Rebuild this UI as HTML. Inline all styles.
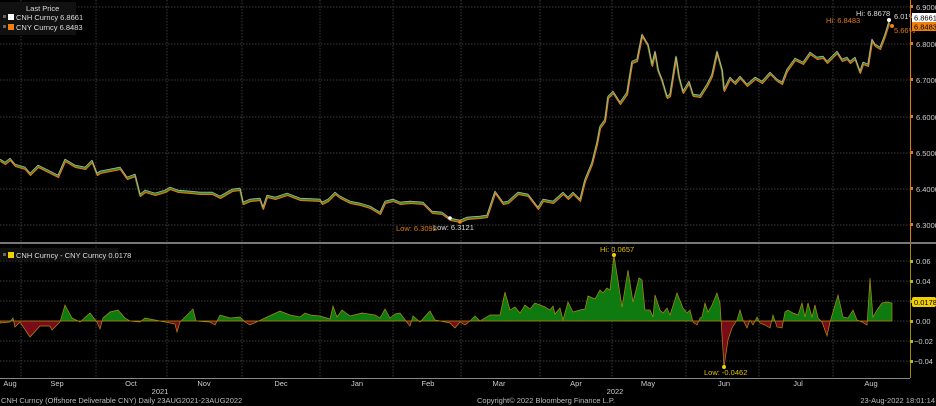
<!DOCTYPE html>
<html><head><meta charset="utf-8"><style>
html,body{margin:0;padding:0;background:#000;}
svg{display:block;font-family:"Liberation Sans",sans-serif;}
text{font-size:7.5px;}
</style></head><body>
<svg width="936" height="406" viewBox="0 0 936 406" xmlns="http://www.w3.org/2000/svg">
<rect width="936" height="406" fill="#000"/>
<defs>
<clipPath id="up"><rect x="0" y="240" width="910" height="81"/></clipPath>
<clipPath id="dn"><rect x="0" y="321" width="910" height="60"/></clipPath>
<polyline id="m" points="0,160 5,163 10,159 15,165 25,168 30,174 38,166 50,172 58,176 65,160 75,166 85,168 92,161 97,174 100,172 110,170 120,168 127,178 135,175 140,195 145,191 155,194 165,191 170,188 178,191 190,192 200,193 212,193 220,197 232,190 240,189 243,203 250,200 260,199 263,208 267,196 275,198 287,194 300,199 320,200 322,203 328,200 335,193 340,197 350,202 360,204 370,207 380,213 385,202 393,200 400,203 410,202 423,203 432,212 442,213 450,219 460,221 467,218 480,217 487,216 495,192 503,203 508,202 518,193 528,195 538,208 543,200 553,202 563,193 568,198 573,193 580,200 585,180 592,163 597,143 600,127 605,120 608,97 613,92 620,103 627,93 632,62 637,60 642,35 648,45 652,65 655,52 658,70 662,80 667,97 670,95 676,57 679,77 683,92 689,82 693,95 700,96 707,85 712,75 717,52 722,70 724,90 730,78 735,83 740,77 747,85 755,78 762,82 770,73 777,80 782,83 787,70 795,59 803,63 810,53 817,58 823,57 827,62 837,52 842,60 847,58 850,62 855,58 860,72 863,63 868,65 872,40 875,45 880,48 885,35 889,22"/>
<polygon id="dp" points="0,321 0,323 10,322 13,318 15,327 20,322 30,337 40,326 50,326 52,330 60,322 65,305 72,318 80,322 90,313 97,322 100,329 103,318 110,312 118,310 125,318 130,321 140,322 145,318 160,321 175,324 177,332 180,322 193,309 196,321 210,322 215,325 220,315 230,318 240,317 245,322 250,325 265,318 280,311 290,315 300,317 305,313 310,315 320,316 330,319 333,306 337,317 342,310 350,316 362,313 375,315 380,318 385,309 390,318 395,314 400,313 406,321 410,326 413,316 420,322 430,311 435,320 445,322 450,323 455,328 460,322 465,325 470,321 475,316 480,321 490,315 500,315 505,292 510,310 515,307 520,313 525,305 530,309 535,303 545,307 550,310 553,306 555,314 560,308 563,320 568,302 573,312 580,310 585,309 588,296 595,299 600,290 603,293 607,288 610,290 614,255 622,307 628,270 633,302 639,278 642,280 645,310 650,310 653,317 655,295 660,310 663,313 667,308 670,315 677,293 683,308 687,313 690,310 693,322 697,325 700,318 702,317 705,303 708,312 712,305 717,293 720,303 724,367 728,340 732,328 737,320 740,310 743,320 747,328 750,320 753,325 757,317 760,323 765,325 770,328 773,315 777,327 782,328 785,312 788,310 793,313 798,315 802,303 805,317 808,303 812,317 815,305 818,318 822,322 827,336 830,322 838,295 843,317 848,318 853,310 857,320 862,322 867,325 870,278 873,317 877,310 882,303 887,302 892,303 892,321"/>
</defs>
<g stroke="#3a3a3a" stroke-width="1" stroke-dasharray="1.5,1.5">
<path d="M0 7H910M0 44H910M0 80H910M0 117H910M0 153H910M0 189H910M0 225H910"/>
<path d="M0 261H910M0 281H910M0 301H910M0 321H910M0 341H910M0 361H910"/>
<path d="M21 0V379M96 0V379M167 0V379M242 0V379M320 0V379M393 0V379M461 0V379M540 0V379M612 0V379M686 0V379M759 0V379M833 0V379"/>
</g>
<rect x="0" y="242" width="936" height="2" fill="#777"/>
<rect x="0" y="378" width="910" height="1" fill="#888"/>
<g fill="none" stroke-linejoin="round">
<use href="#m" stroke="#3d8a1c" stroke-width="2" transform="translate(0,0.3)"/>
<use href="#m" stroke="#e07a10" stroke-width="1.1" transform="translate(0.5,1.5)"/>
<use href="#m" stroke="#b8b8b8" stroke-width="0.7" transform="translate(0,-0.9)"/>
</g>
<circle cx="889" cy="20" r="2" fill="#fff"/>
<circle cx="892" cy="26" r="2" fill="#f08010"/>
<circle cx="450" cy="218" r="1.8" fill="#fff"/>
<circle cx="460" cy="222" r="1.8" fill="#f08010"/>
<text x="396" y="231" fill="#e07a10">Low: 6.3092</text>
<text x="433" y="230" fill="#ddd">Low: 6.3121</text>
<text x="826" y="23" fill="#e07a10">Hi: 6.8483</text>
<text x="856" y="16" fill="#ddd">Hi: 6.8678</text>
<text x="894" y="19" fill="#ddd">6.01%</text>
<text x="894" y="33" fill="#e07a10">5.66%</text>
<rect x="910" y="0" width="1" height="242" fill="#e07a10"/>
<rect x="910" y="244" width="1" height="134" fill="#a08c00"/>
<g fill="#e07a10"><path d="M910 5h3v3h-3zM910 42h3v3h-3zM910 78h3v3h-3zM910 115h3v3h-3zM910 151h3v3h-3zM910 187h3v3h-3zM910 223h3v3h-3z"/></g>
<g fill="#ccc">
<text x="916" y="10">6.9000</text><text x="916" y="47">6.8000</text><text x="916" y="83">6.7000</text><text x="916" y="120">6.6000</text><text x="916" y="156">6.5000</text><text x="916" y="192">6.4000</text><text x="916" y="228">6.3000</text>
</g>
<rect x="912" y="13" width="24" height="9" fill="#fff"/><text x="914" y="20.5" fill="#000">6.8661</text>
<rect x="912" y="22" width="24" height="9" fill="#f08010"/><text x="914" y="29.5" fill="#000">6.8483</text>
<use href="#dp" fill="#0f7a10" clip-path="url(#up)"/>
<use href="#dp" fill="#7a0c1a" clip-path="url(#dn)"/>
<use href="#dp" fill="none" stroke="#b08a10" stroke-width="0.7"/>
<circle cx="614" cy="255" r="2" fill="#f0d000"/>
<circle cx="724" cy="367" r="2" fill="#f0d000"/>
<text x="600" y="252" fill="#e0c000">Hi: 0.0657</text>
<text x="704" y="375" fill="#e0c000">Low: -0.0462</text>
<g fill="#c8b000"><path d="M910 260h3v3h-3zM910 280h3v3h-3zM910 300h3v3h-3zM910 320h3v3h-3zM910 340h3v3h-3zM910 360h3v3h-3z"/></g>
<g fill="#ccc">
<text x="916" y="264">0.06</text><text x="916" y="284">0.04</text><text x="916" y="324">0.00</text><text x="914" y="344">−0.02</text><text x="914" y="364">−0.04</text>
</g>
<rect x="912" y="297" width="24" height="10" rx="2" fill="#f0d000"/><text x="914" y="305" fill="#000">0.0178</text>
<rect x="0" y="2" width="76" height="33" fill="#111"/>
<text x="26" y="11" fill="#ddd">Last Price</text>
<rect x="3" y="15" width="3" height="3" fill="#666"/><rect x="8" y="14" width="6" height="6" fill="#fff"/>
<text x="16" y="20" fill="#ddd">CNH Curncy 6.8661</text>
<rect x="3" y="25" width="3" height="3" fill="#666"/><rect x="8" y="24" width="6" height="6" fill="#f08010"/>
<text x="16" y="30" fill="#ddd">CNY Curncy 6.8483</text>
<rect x="0" y="248" width="118" height="12" fill="#111"/>
<rect x="3" y="253" width="3" height="3" fill="#666"/><rect x="8" y="252" width="6" height="6" fill="#f0d000"/>
<text x="16" y="258" fill="#ddd">CNH Curncy - CNY Curncy 0.0178</text>
<g fill="#ccc" text-anchor="middle">
<text x="10" y="386">Aug</text><text x="57" y="386">Sep</text><text x="131" y="386">Oct</text><text x="204" y="386">Nov</text><text x="281" y="386">Dec</text><text x="357" y="386">Jan</text><text x="428" y="386">Feb</text><text x="499" y="386">Mar</text><text x="576" y="386">Apr</text><text x="648" y="386">May</text><text x="724" y="386">Jun</text><text x="798" y="386">Jul</text><text x="871" y="386">Aug</text>
<text x="160" y="394">2021</text><text x="615" y="394">2022</text>
</g>
<g fill="#bbb">
<text x="1" y="403">CNH Curncy (Offshore Deliverable CNY)  Daily 23AUG2021-23AUG2022</text>
<text x="477" y="403">Copyright© 2022 Bloomberg Finance L.P.</text>
<text x="935" y="403" text-anchor="end">23-Aug-2022 18:01:14</text>
</g>
</svg>
</body></html>
